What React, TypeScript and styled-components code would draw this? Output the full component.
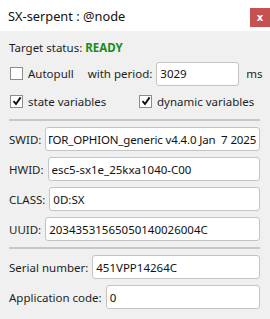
import * as React from 'react'
import styled, { createGlobalStyle } from 'styled-components'

const GlobalStyle = createGlobalStyle`
  html, body {
    margin: 0;
    padding: 0;
    background: #f0f0f0;
  }
  * {
    box-sizing: border-box;
  }
`

const Window = styled.div`
  width: 270px;
  height: 319px;
  display: flex;
  flex-direction: column;
  background-color: #f0f0f0;
  color: #1e1e1e;
  font-family: "Noto Sans", "Open Sans", sans-serif;
  font-size: 11.5px;
  overflow: hidden;
`

const TitleBar = styled.header`
  height: 31px;
  flex: none;
  display: flex;
  align-items: flex-start;
  justify-content: space-between;
  padding-left: 8px;
  background-color: #ffffff;
`

const Title = styled.span`
  margin-top: 7px;
  font-size: 12.8px;
  color: #111111;
`

const CloseButton = styled.button`
  width: 20px;
  height: 19px;
  margin-top: 8px;
  padding: 0;
  border: none;
  border-radius: 0;
  background-color: #c75050;
  color: #ffffff;
  font-family: "DejaVu Sans", sans-serif;
  font-size: 10px;
  font-weight: bold;
  line-height: 19px;
`

const Content = styled.main`
  display: flex;
  flex-direction: column;
  padding: 8px 10px 0 9px;
`

const StatusLine = styled.div`
  height: 18px;
  line-height: 18px;
`

const Ready = styled.span`
  color: #198c19;
  font-weight: bold;
`

const Row = styled.div`
  display: flex;
  align-items: center;
  gap: ${props => props.$gap ?? 4}px;
  height: ${props => props.$height ?? 24}px;
  margin-top: ${props => props.$top ?? 6}px;
`

const CheckLabel = styled.label`
  display: flex;
  align-items: center;
  gap: 5px;
  width: ${props => props.$width ?? 'auto'};
  padding-left: 1px;
`

const Box = styled.span`
  width: 13px;
  height: 13px;
  flex: none;
  display: flex;
  align-items: center;
  justify-content: center;
  background-color: #ffffff;
  border: 1px solid #8c8c8c;
`

const Text = styled.span`
  margin-left: ${props => props.$left ?? 0}px;
  white-space: nowrap;
`

const Field = styled.input`
  height: 24px;
  min-width: 0;
  flex: 1;
  padding: 0 3px;
  border: 1px solid #c4c4c4;
  border-radius: 3px;
  background-color: #ffffff;
  color: #111111;
  font-family: inherit;
  font-size: 11.5px;
  letter-spacing: ${props => props.$tight ? '-0.15px' : 'normal'};
  outline: none;
`

const PeriodField = styled(Field)`
  flex: none;
  width: 83px;
`

const Divider = styled.hr`
  margin: ${props => props.$top}px 0 0 0;
  border: none;
  height: 2px;
  background-color: #c8c8c8;
`

function CheckBox ({ checked, children, width }: { checked: boolean, children: React.ReactNode, width?: string }): React.ReactElement {
  return (
    <CheckLabel $width={width}>
      <Box>
        {checked && (
          <svg width='10' height='10' viewBox='0 0 10 10'>
            <path d='M1.5 5.2 L4 8 L8.6 1.4' fill='none' stroke='#111' strokeWidth='1.9' />
          </svg>
        )}
      </Box>
      <span>{children}</span>
    </CheckLabel>
  )
}

// long values are shown scrolled to their end, as the original does
function InfoRow ({ label, value, long }: { label: string, value: string, long?: boolean }): React.ReactElement {
  const ref = React.useRef<HTMLInputElement>(null)

  React.useEffect(() => {
    if (long && ref.current != null) {
      ref.current.scrollLeft = ref.current.scrollWidth
    }
  }, [long])

  return (
    <Row $top={6}>
      <Text>{label}</Text>
      <Field ref={ref} $tight={long} defaultValue={value} />
    </Row>
  )
}

const fields1 = [
  { label: 'SWID:', value: 'TOR_OPHION_generic v4.4.0 Jan  7 2025', long: true },
  { label: 'HWID:', value: 'esc5-sx1e_25kxa1040-C00' },
  { label: 'CLASS:', value: '0D:SX' },
  { label: 'UUID:', value: '20343531565050140026004C' }
]

const fields2 = [
  { label: 'Serial number:', value: '451VPP14264C' },
  { label: 'Application code:', value: '0' }
]

export default function App (): React.ReactElement {
  return (
    <Window>
      <GlobalStyle />
      <TitleBar>
        <Title>SX-serpent : @node</Title>
        <CloseButton title='Close'>x</CloseButton>
      </TitleBar>
      <Content>
        <StatusLine>Target status: <Ready>READY</Ready></StatusLine>
        <Row $top={4} $height={25}>
          <CheckBox checked={false}>Autopull</CheckBox>
          <Text $left={10}>with period:</Text>
          <PeriodField defaultValue='3029' />
          <Text $left={3}>ms</Text>
        </Row>
        <Row $top={5} $height={20} $gap={0}>
          <CheckBox checked width='129px'>state variables</CheckBox>
          <CheckBox checked>dynamic variables</CheckBox>
        </Row>
        <Divider $top={8} />
        {fields1.map(f => <InfoRow key={f.label} {...f} />)}
        <Divider $top={6} />
        {fields2.map(f => <InfoRow key={f.label} {...f} />)}
      </Content>
    </Window>
  )
}
